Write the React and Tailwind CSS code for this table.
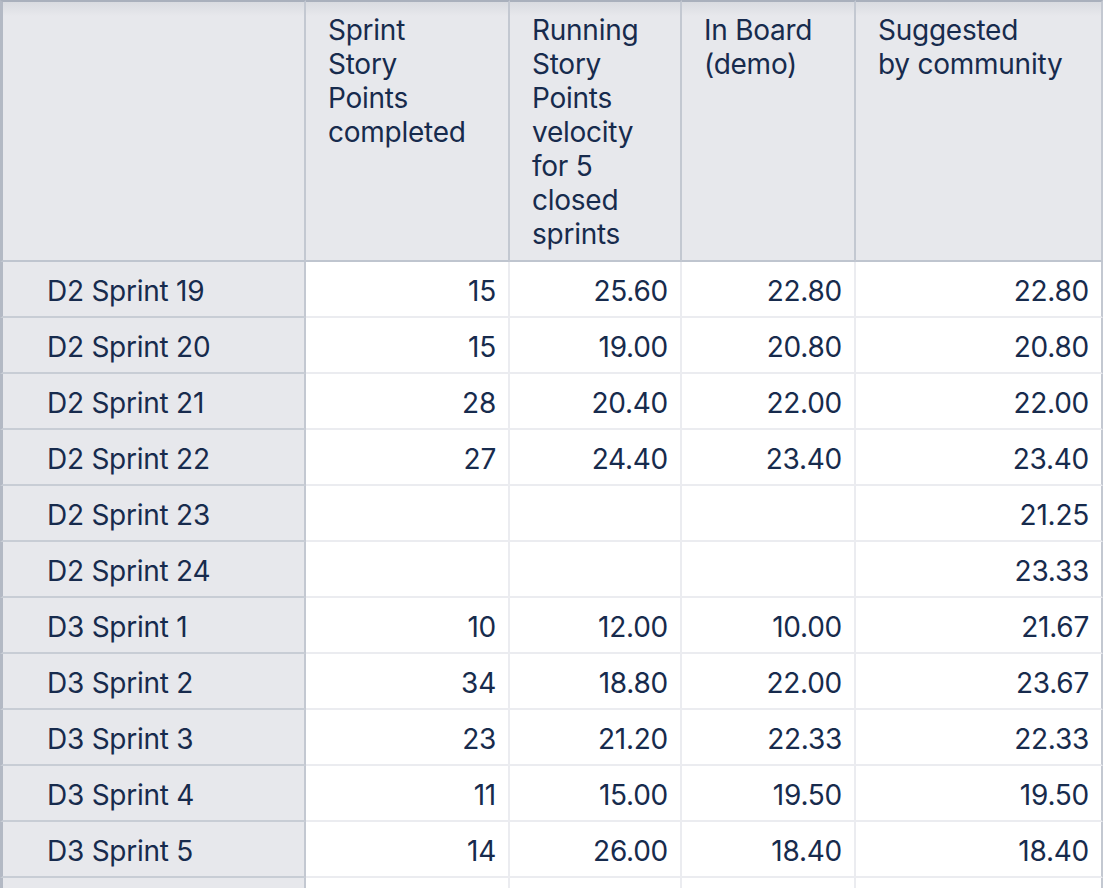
const headers = [
  "",
  "Sprint Story Points completed",
  "Running Story Points velocity for 5 closed sprints",
  "In Board (demo)",
  "Suggested by community",
];

const headerLines = [
  [],
  ["Sprint", "Story", "Points", "completed"],
  ["Running", "Story", "Points", "velocity", "for 5", "closed", "sprints"],
  ["In Board", "(demo)"],
  ["Suggested", "by community"],
];

const rows = [
  ["D2 Sprint 19", "15", "25.60", "22.80", "22.80"],
  ["D2 Sprint 20", "15", "19.00", "20.80", "20.80"],
  ["D2 Sprint 21", "28", "20.40", "22.00", "22.00"],
  ["D2 Sprint 22", "27", "24.40", "23.40", "23.40"],
  ["D2 Sprint 23", "", "", "", "21.25"],
  ["D2 Sprint 24", "", "", "", "23.33"],
  ["D3 Sprint 1", "10", "12.00", "10.00", "21.67"],
  ["D3 Sprint 2", "34", "18.80", "22.00", "23.67"],
  ["D3 Sprint 3", "23", "21.20", "22.33", "22.33"],
  ["D3 Sprint 4", "11", "15.00", "19.50", "19.50"],
  ["D3 Sprint 5", "14", "26.00", "18.40", "18.40"],
  ["", "", "", "", ""], // next row, cut off by the frame
];

const colWidths = ["w-[306px]", "w-[204px]", "w-[172px]", "w-[174px]", "w-[247px]"];

const App = () => {
  return (
    <div
      className="bg-white min-h-screen text-[#172b4d] text-[28px] leading-[34px] tracking-[-0.25px]"
      style={{ fontFamily: "Inter, 'Noto Sans', sans-serif" }}
    >
      <table className="table-fixed border-separate border-spacing-0 w-[1103px]">
        <colgroup>
          {colWidths.map((w, i) => (
            <col key={i} className={w} />
          ))}
        </colgroup>
        <thead>
          <tr>
            {headers.map((h, i) => (
              <th
                key={i}
                title={h}
                className={
                  "h-[262px] align-top text-left font-normal pl-[22px] pr-2 pt-[11px] border-t-2 border-b-2 border-r-2 border-t-[#a9b0bc] border-b-[#bfc5cf] border-r-[#c3c8d1] bg-[linear-gradient(to_bottom,#d9dbe0,#e7e8ec_14px)]" +
                  (i === 0 ? " border-l-[3px] border-l-[#b3b9c4]" : "")
                }
              >
                {headerLines[i].map((line, j) => (
                  <div key={j}>{line}</div>
                ))}
              </th>
            ))}
          </tr>
        </thead>
        <tbody>
          {rows.map((row, r) => (
            <tr key={r} className="h-[56px]">
              {/* sprint name column */}
              <td className="bg-[#e7e8ec] border-l-[3px] border-l-[#b3b9c4] border-r-2 border-r-[#c3c8d1] border-b-2 border-b-[#c8cdd5] pl-[44px] pt-[3px] align-middle whitespace-nowrap">
                {row[0]}
              </td>
              {row.slice(1).map((cell, c) => (
                <td
                  key={c}
                  className={
                    "bg-white text-right pr-[12px] pt-[3px] align-middle border-b-2 border-b-[#ebecf0] border-r-2 " +
                    (c === 3 ? "border-r-[#c3c8d1]" : "border-r-[#ebecf0]")
                  }
                >
                  {cell}
                </td>
              ))}
            </tr>
          ))}
        </tbody>
      </table>
    </div>
  );
};

export default App;
